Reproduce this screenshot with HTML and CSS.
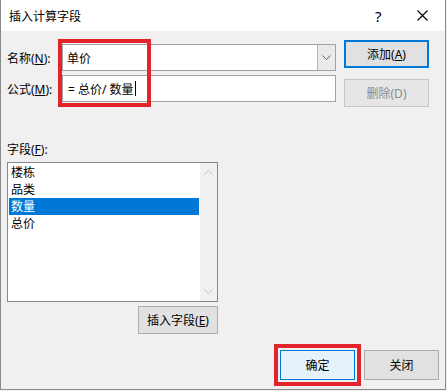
FILE: index.html
```html
<!DOCTYPE html>
<html lang="zh-CN">
<head>
	<meta charset="UTF-8">
	<title>插入计算字段</title>
	<link rel="stylesheet" href="styles.css">
</head>
<body>
	<div class="dialog">
		<div class="titlebar">
			<span class="title">插入计算字段</span>
			<span class="help">?</span>
			<span class="close">
				<svg width="11" height="11" viewBox="0 0 11 11"><path d="M0.5 0.5L10.5 10.5M10.5 0.5L0.5 10.5" stroke="#000" stroke-width="1.1" fill="none"/></svg>
			</span>
		</div>
		<div class="top">
			<div class="form-col">
				<div class="row">
					<label>名称(<u>N</u>):</label>
					<div class="combo">
						<span class="combo-text">单价</span>
						<span class="combo-btn"><svg width="9" height="5" viewBox="0 0 9 5"><path d="M0.5 0.5L4.5 4.5L8.5 0.5" stroke="#606060" fill="none"/></svg></span>
					</div>
				</div>
				<div class="row">
					<label>公式(<u>M</u>):</label>
					<div class="text-input">= 总价/ 数量<span class="caret"></span></div>
				</div>
			</div>
			<div class="btn-col">
				<button class="btn btn-default">添加(<u>A</u>)</button>
				<button class="btn" disabled>删除(D)</button>
			</div>
			<div class="mark"></div>
		</div>
		<div class="list-label">字段(<u>F</u>):</div>
		<div class="listbox">
			<ul>
				<li>楼栋</li>
				<li>品类</li>
				<li class="selected">数量</li>
				<li>总价</li>
			</ul>
			<div class="scrollbar">
				<svg width="9" height="5" viewBox="0 0 9 5"><path d="M0.5 4.5L4.5 0.5L8.5 4.5" stroke="#c2c2c2" fill="none"/></svg>
				<svg width="9" height="5" viewBox="0 0 9 5"><path d="M0.5 0.5L4.5 4.5L8.5 0.5" stroke="#c2c2c2" fill="none"/></svg>
			</div>
		</div>
		<div class="insert-row"><button class="btn btn-insert">插入字段(<u>E</u>)</button></div>
		<div class="footer">
			<button class="btn btn-ok">确定</button>
			<button class="btn btn-close">关闭</button>
		</div>
	</div>
</body>
</html>
```
FILE: styles.css
```css
*{box-sizing: border-box;}
body{margin: 0;background: #f0f0f0;font-family: "Noto Sans", "Noto Sans CJK SC", sans-serif;font-size: 12px;color: #000;}
u{text-decoration: underline;text-underline-offset: 1px;}
.dialog{width: 446px;height: 390px;background: #f0f0f0;border: 1px solid #8a8a8a;border-top: none;}
.titlebar{height: 31px;background: #fff;display: flex;align-items: center;padding-left: 8px;}
.title{flex: 1;font-size: 12px;}
.help{font-size: 15px;width: 14px;margin-right: 28px;}
.close{display: flex;margin-right: 17px;}

.top{display: flex;padding-left: 6px;position: relative;}
.form-col{margin-top: 13px;display: flex;flex-direction: column;gap: 4px;}
.row{display: flex;align-items: center;height: 27px;}
.row label{width: 55px;}
.combo, .text-input{width: 274px;height: 27px;background: #fff;border: 1px solid #a2a2a2;display: flex;align-items: center;}
.combo-text{flex: 1;padding-left: 4px;}
.combo-btn{width: 18px;height: 100%;background: #eaeaea;border-left: 1px solid #b5b5b5;display: flex;align-items: center;justify-content: center;}
.text-input{padding-left: 5px;}
.caret{display: inline-block;width: 1px;height: 15px;background: #000;margin-left: 1px;}
.btn-col{margin-top: 9px;margin-left: 8px;display: flex;flex-direction: column;gap: 11px;}
.btn{font-family: inherit;font-size: 12px;color: #000;background: #e1e1e1;border: 1px solid #adadad;height: 28px;padding: 0;}
.btn-col .btn{width: 85px;}
.btn-default{border: 2px solid #0078d7;}
.btn[disabled]{background: #e6e6e6;border-color: #c6c6c6;color: #8a8a8a;}
.mark{position: absolute;left: 57px;top: 8px;width: 93px;height: 68px;border: 4px solid #e3242b;}

.list-label{margin: 34px 0 0 6px;line-height: 17px;}
.listbox{margin: 4px 0 0 6px;width: 211px;height: 140px;background: #fff;border: 1px solid #828790;display: flex;}
.listbox ul{flex: 1;list-style: none;margin: 0;padding: 1px;}
.listbox li{height: 17px;line-height: 17px;padding-left: 2px;}
.listbox li.selected{background: #0078d7;color: #fff;}
.scrollbar{width: 17px;background: #f0f0f0;display: flex;flex-direction: column;justify-content: space-between;align-items: center;padding: 7px 0 7px;}

.insert-row{width: 217px;display: flex;justify-content: flex-end;margin-top: 4px;}
.btn-insert{width: 80px;}
.footer{display: flex;justify-content: flex-end;gap: 9px;padding-right: 6px;margin-top: 16px;}
.btn-ok, .btn-close{width: 75px;height: 30px;}
.btn-ok{background: #e5f1fb;border-color: #0078d7;outline: 4px solid #e3242b;outline-offset: 2px;}
```
